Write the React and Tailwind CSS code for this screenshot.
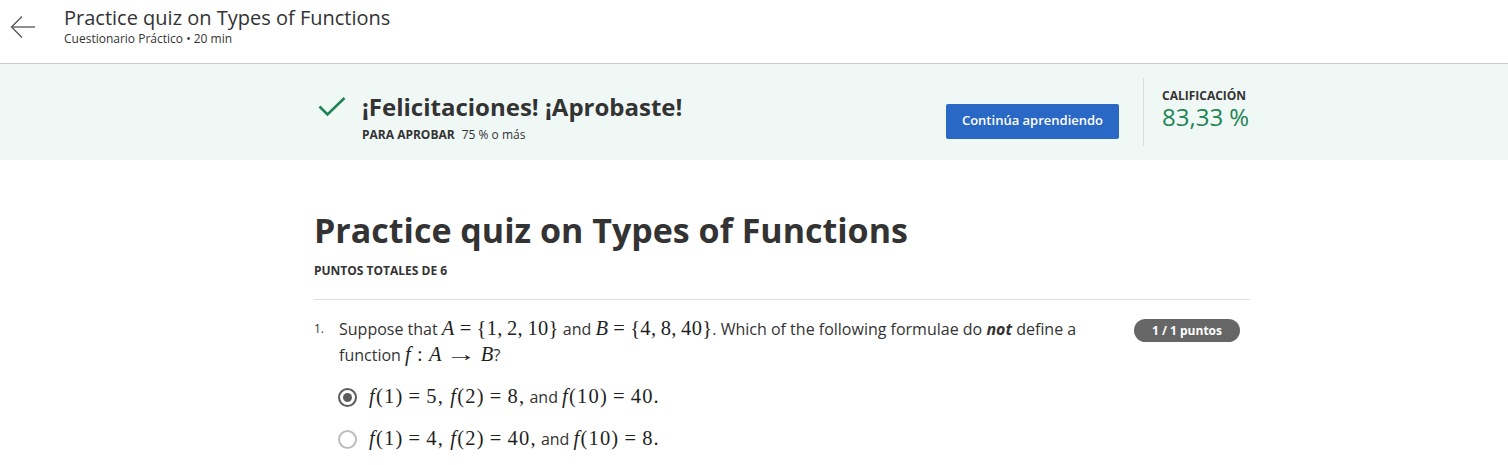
import React from "react"

const sans = { fontFamily: '"Open Sans", "Liberation Sans", sans-serif' }

function V({ children }) {
  return <span className="italic">{children}</span>
}

function Op({ children, wide }) {
  return <span className={wide ? "mx-[6px]" : "mx-[5px]"}>{children}</span>
}

function M({ children, tight }) {
  return (
    <span
      className={`text-[20.5px] leading-none text-[#1f1f1f] ${tight ? "tracking-[0.3px]" : "tracking-[1.2px]"}`}
      style={{ fontFamily: '"Liberation Serif", "DejaVu Serif", serif' }}
    >
      {children}
    </span>
  )
}

function Radio({ checked }) {
  return (
    <span
      className={`flex h-[19px] w-[19px] shrink-0 items-center justify-center rounded-full border-2 ${
        checked ? "border-[#5c5c5c]" : "border-[#bdbdbd]"
      }`}
    >
      {checked && <span className="h-[9px] w-[9px] rounded-full bg-[#5c5c5c]" />}
    </span>
  )
}

export default function App() {
  return (
    <div className="min-h-[465px] bg-white text-[#1f1f1f]" style={sans}>
      {/* top bar */}
      <header className="flex h-[64px] items-start border-b border-[#c9c9c9]">
        <div className="flex w-[64px] justify-start pl-[10px] pt-[15px]">
          <svg width="26" height="24" viewBox="0 0 26 24" fill="none" stroke="#555" strokeWidth="1.3">
            <path d="M25 12H2" />
            <path d="M12 1.5L1.5 12L12 22.5" />
          </svg>
        </div>
        <div className="pt-[5px]">
          <div className="text-[20px] leading-[26px] text-[#333]">Practice quiz on Types of Functions</div>
          <div className="text-[12px] leading-[16px] text-[#333]">Cuestionario Práctico • 20 min</div>
        </div>
      </header>

      {/* result banner */}
      <div className="h-[96px] bg-[#f0f8f6]">
        <div className="ml-[314px] flex w-[936px] items-center">
          <div className="flex flex-1 items-start pt-[24px]">
            <svg className="ml-[4px] mt-[6px]" width="28" height="20" viewBox="0 0 28 20" fill="none" stroke="#1f8354" strokeWidth="2.6">
              <path d="M1.5 9.5L9.5 17.5L26.5 1" />
            </svg>
            <div className="ml-[16px]">
              <div className="text-[24px] font-bold leading-[32px] text-[#333]">¡Felicitaciones! ¡Aprobaste!</div>
              <div className="mt-[4px] text-[12px] leading-[16px] text-[#333]">
                <span className="font-bold">PARA APROBAR</span>
                <span className="ml-[7px]">75 % o más</span>
              </div>
            </div>
          </div>
          <button className="mt-[32px] h-[35px] w-[173px] rounded-[2px] bg-[#2a68c6] text-[13px] font-semibold text-white">
            Continúa aprendiendo
          </button>
          <div className="ml-[24px] mt-[14px] h-[68px] w-px bg-[#dcdcdc]" />
          <div className="ml-[18px] mt-[8px] w-[88px]">
            <div className="text-[12px] font-bold leading-[16px] text-[#333]">CALIFICACIÓN</div>
            <div className="text-[24px] leading-[26px] text-[#1f8354]">83,33 %</div>
          </div>
        </div>
      </div>

      {/* quiz */}
      <div className="ml-[314px] w-[936px]">
        <h1 className="mt-[44px] text-[34px] font-bold leading-[52px] text-[#333]">Practice quiz on Types of Functions</h1>
        <div className="mt-[7px] text-[12px] font-bold leading-[16px] text-[#333]">PUNTOS TOTALES DE 6</div>
        <div className="mt-[20px] h-px bg-[#e0e0e0]" />

        <div className="mt-[16px] flex items-start">
          <div className="w-[25px] pt-[3px] text-[12px] leading-[20px] text-[#333]">1.</div>
          <div className="w-[770px] text-[16px] leading-[26px] text-[#333]">
            Suppose that{" "}
            <M tight>
              <V>A</V>
              <Op>=</Op>
              {"{1,\u20092,\u200910}"}
            </M>{" "}
            and{" "}
            <M tight>
              <V>B</V>
              <Op>=</Op>
              {"{4,\u20098,\u200940}"}
            </M>
            . Which of the following formulae do <span className="font-bold italic">not</span> define a function{" "}
            <M tight>
              <V>f</V>
              <Op wide>:</Op>
              <V>A</V>
              <Op wide>
                <span className="inline-block scale-x-[1.5] px-[3px]">→</span>
              </Op>
              <V>B</V>
            </M>
            ?
          </div>
          <div className="ml-auto mr-[10px] mt-[3px] flex h-[23px] w-[106px] items-center justify-center rounded-full bg-[#666] text-[12px] font-bold text-white">
            1 / 1 puntos
          </div>
        </div>

        <div className="ml-[24px] mt-[16px] flex flex-col gap-[16px]">
          <div className="flex h-[26px] items-center">
            <Radio checked />
            <span className="ml-[12px] text-[16px] leading-[26px] text-[#333]">
              <M>
                <V>f</V>(1)<Op>=</Op>5, <V>f</V>(2)<Op>=</Op>8,
              </M>{" "}
              and{" "}
              <M>
                <V>f</V>(10)<Op>=</Op>40.
              </M>
            </span>
          </div>
          <div className="flex h-[26px] items-center">
            <Radio />
            <span className="ml-[12px] text-[16px] leading-[26px] text-[#333]">
              <M>
                <V>f</V>(1)<Op>=</Op>4, <V>f</V>(2)<Op>=</Op>40,
              </M>{" "}
              and{" "}
              <M>
                <V>f</V>(10)<Op>=</Op>8.
              </M>
            </span>
          </div>
        </div>
      </div>
    </div>
  )
}
